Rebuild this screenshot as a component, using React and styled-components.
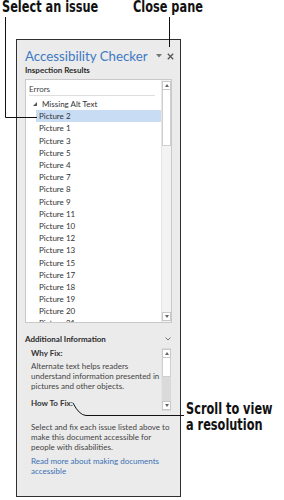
import React from 'react';
import styled, { createGlobalStyle } from 'styled-components';

const GlobalStyle = createGlobalStyle`
  html, body {
    margin: 0;
    background: #fff;
  }
`;

const Page = styled.div`
  position: relative;
  width: 284px;
  height: 500px;
  overflow: hidden;
  padding: 39px 0 0 16px;
  box-sizing: border-box;
  font-family: Lato, "Open Sans", sans-serif;
`;

const Callout = styled.div`
  position: absolute;
  left: ${p => p.x}px;
  top: ${p => p.y}px;
  font-family: "Liberation Sans Narrow", "DejaVu Sans Condensed", sans-serif;
  font-weight: 700;
  font-size: 15px;
  line-height: 15.5px;
  color: #111;
  white-space: nowrap;
  transform: scaleX(0.84);
  transform-origin: left top;
`;

const Leaders = styled.svg`
  position: absolute;
  left: 0;
  top: 0;
  pointer-events: none;
`;

const Panel = styled.div`
  width: 165px;
  height: 458px;
  box-sizing: border-box;
  border: 1px solid #2f2f2f;
  background: #ebebeb;
  padding: 0 8px;
  display: flex;
  flex-direction: column;
`;

const Header = styled.div`
  display: flex;
  align-items: center;
  margin-top: 7px;
  height: 18px;
  margin-right: -2px;
`;

const Title = styled.div`
  flex: 1;
  font-size: 13.3px;
  font-weight: 400;
  line-height: 18px;
  color: #4079c3;
  white-space: nowrap;
`;

const HeaderIcon = styled.svg`
  flex: none;
  margin-left: ${p => p.gap || 0}px;
`;

const Heading = styled.div`
  font-size: 8px;
  line-height: 10px;
  font-weight: 700;
  color: #2b2b2b;
  margin-top: ${p => p.top || 0}px;
  display: flex;
  justify-content: space-between;
  align-items: center;
`;

const ListBox = styled.div`
  margin-top: 4px;
  height: 244px;
  box-sizing: border-box;
  border: 1px solid #c9c9c9;
  background: #fff;
  display: flex;
`;

const ListArea = styled.div`
  flex: 1;
  overflow: hidden;
  padding: 4px 0 0 3px;
`;

const GroupLabel = styled.div`
  font-size: 8px;
  line-height: 10px;
  height: 11px;
  color: #444;
  width: 126px;
  border-bottom: 1px solid #dedede;
  margin-bottom: 2px;
`;

const Row = styled.div`
  height: 12.2px;
  display: flex;
  align-items: center;
  font-size: 8px;
  color: #333;
  white-space: nowrap;
  margin-left: ${p => (p.group ? 1 : 7)}px;
  padding-left: 3px;
  background: ${p => (p.selected ? '#c8dcf3' : 'transparent')};
`;

const Expander = styled.span`
  width: 0;
  height: 0;
  border-left: 4px solid transparent;
  border-bottom: 4px solid #555;
  margin-right: 5px;
`;

const Scrollbar = styled.div`
  flex: none;
  width: 10px;
  display: flex;
  flex-direction: column;
  align-items: center;
  background: ${p => p.track || '#f3f3f3'};
  border-left: 1px solid #e6e6e6;
  box-sizing: border-box;
  margin-right: ${p => p.inset || 0}px;
`;

const ScrollButton = styled.div`
  width: 9px;
  height: 9px;
  box-sizing: border-box;
  border: 1px solid #c9c9c9;
  background: #fff;
  display: flex;
  align-items: center;
  justify-content: center;
  margin: ${p => (p.down ? '0 0 1px' : '1px 0 0')};

  &::after {
    content: '';
    width: 0;
    height: 0;
    border-left: 2.5px solid transparent;
    border-right: 2.5px solid transparent;
    ${p => (p.down ? 'border-top: 3px solid #666;' : 'border-bottom: 3px solid #666;')}
  }
`;

const Thumb = styled.div`
  width: 9px;
  height: ${p => p.size}px;
  box-sizing: border-box;
  border: 1px solid #cfcfcf;
  border-top: none;
  background: #fff;
`;

const Spacer = styled.div`
  flex: 1;
`;

const InfoBox = styled.div`
  margin-top: 4px;
  height: 63px;
  display: flex;
`;

const InfoText = styled.div`
  flex: 1;
  padding-left: 6px;
  overflow: hidden;
`;

const SubHeading = styled.div`
  font-size: 8px;
  line-height: 10px;
  font-weight: 700;
  color: #333;
  margin-top: ${p => p.top || 0}px;
`;

const Para = styled.p`
  margin: ${p => p.top || 0}px 0 0;
  padding-left: ${p => p.indent || 0}px;
  font-size: 8px;
  line-height: 10px;
  color: ${p => (p.link ? '#3a70b5' : '#444')};
  white-space: nowrap;
`;

const items = [2, 1, 3, 5, 4, 7, 8, 9, 11, 10, 12, 13, 15, 17, 18, 19, 20, 21];

export default function App() {
  return (
    <Page>
      <GlobalStyle />
      <Panel>
        <Header>
          <Title>Accessibility Checker</Title>
          <HeaderIcon width="6" height="4" viewBox="0 0 6 4">
            <path d="M0 0 H6 L3 3.5 Z" fill="#777" />
          </HeaderIcon>
          <HeaderIcon gap={5} width="7" height="7" viewBox="0 0 7 7">
            <path d="M0.8 0.8 L6.2 6.2 M6.2 0.8 L0.8 6.2" stroke="#555" strokeWidth="1.3" />
          </HeaderIcon>
        </Header>
        <Heading>Inspection Results</Heading>
        <ListBox>
          <ListArea>
            <GroupLabel>Errors</GroupLabel>
            <Row group>
              <Expander />
              Missing Alt Text
            </Row>
            {items.map(n => (
              <Row key={n} selected={n === 2}>Picture {n}</Row>
            ))}
          </ListArea>
          <Scrollbar>
            <ScrollButton />
            <Thumb size={56} />
            <Spacer />
            <ScrollButton down />
          </Scrollbar>
        </ListBox>
        <Heading top={11}>
          Additional Information
          <svg width="6" height="4" viewBox="0 0 6 4" style={{ marginRight: 1 }}>
            <path d="M0.5 0.5 L3 3 L5.5 0.5" stroke="#777" fill="none" strokeWidth="1" />
          </svg>
        </Heading>
        <InfoBox>
          <InfoText>
            <SubHeading>Why Fix:</SubHeading>
            <Para top={3}>
              Alternate text helps readers<br />
              understand information presented in<br />
              pictures and other objects.
            </Para>
            <SubHeading top={7}>How To Fix:</SubHeading>
          </InfoText>
          <Scrollbar track="#dadada" inset={1}>
            <ScrollButton />
            <Thumb size={19} />
            <Spacer />
            <ScrollButton down />
          </Scrollbar>
        </InfoBox>
        <Para top={11} indent={6}>
          Select and fix each issue listed above to<br />
          make this document accessible for<br />
          people with disabilities.
        </Para>
        <Para top={4} indent={6} link>
          Read more about making documents<br />
          accessible
        </Para>
      </Panel>

      <Callout x={2} y={0}>Select an issue</Callout>
      <Callout x={133} y={0}>Close pane</Callout>
      <Callout x={186} y={402}>Scroll to view<br />a resolution</Callout>

      <Leaders width="284" height="500" viewBox="0 0 284 500">
        <g stroke="#111" strokeWidth="1" fill="none">
          <path d="M5.5 17 V117.5 H37" />
          <path d="M169.5 17 V47" />
          <path d="M73 403 Q79 415 86 415.5 H184" />
        </g>
      </Leaders>
    </Page>
  );
}
